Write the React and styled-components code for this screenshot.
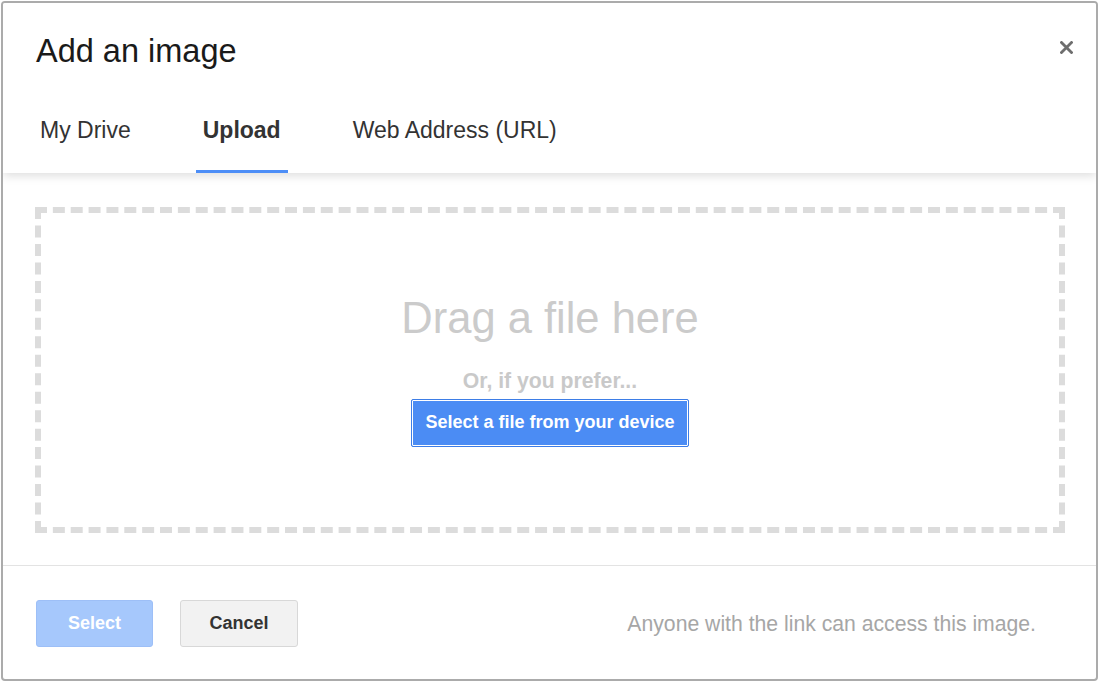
import React, { useState } from "react";
import styled, { createGlobalStyle } from "styled-components";

const GlobalStyle = createGlobalStyle`
  html, body {
    margin: 0;
    background: #fff;
    font-family: "Liberation Sans", Arial, sans-serif;
  }
`;

const tabs = [
  { id: "drive", text: "My Drive" },
  { id: "upload", text: "Upload" },
  { id: "url", text: "Web Address (URL)" },
];

export default function App() {
  const [active, setActive] = useState("upload");

  return (
    <>
      <GlobalStyle />
      <Dialog>
        <Header>
          <TitleRow>
            <Title>Add an image</Title>
            <Close type="button" aria-label="Close">
              <svg width="13" height="13" viewBox="0 0 13 13">
                <path d="M1.5 1.5 L11.5 11.5 M11.5 1.5 L1.5 11.5" stroke="#6e6e6e" strokeWidth="2.8" strokeLinecap="square" />
              </svg>
            </Close>
          </TitleRow>
          <Tabs>
            {tabs.map((tab) => (
              <Tab key={tab.id} $active={tab.id === active} onClick={() => setActive(tab.id)}>
                {tab.text}
              </Tab>
            ))}
          </Tabs>
        </Header>

        <Body>
          <DropZone>
            <DropTitle>Drag a file here</DropTitle>
            <Prefer>Or, if you prefer...</Prefer>
            <PickButton type="button">Select a file from your device</PickButton>
          </DropZone>
        </Body>

        <Footer>
          <FooterButton type="button" $primary disabled>Select</FooterButton>
          <FooterButton type="button">Cancel</FooterButton>
          <Note>Anyone with the link can access this image.</Note>
        </Footer>
      </Dialog>
    </>
  );
}

const Dialog = styled.div`
  box-sizing: border-box;
  margin: 1px;
  width: 1097px;
  height: 680px;
  border: 2px solid #ababab;
  border-radius: 4px;
  background: #fff;
  display: flex;
  flex-direction: column;
  overflow: hidden;
`;

const Header = styled.div`
  position: relative;
  z-index: 1;
  padding: 31.5px 22px 0 30px;
  background: #fff;
  box-shadow: 0 3px 9px rgba(0, 0, 0, 0.13);
`;

const TitleRow = styled.div`
  display: flex;
  justify-content: space-between;
  align-items: flex-start;
`;

const Title = styled.h1`
  margin: 0 0 0 3px;
  font-size: 32.5px;
  line-height: 1;
  font-weight: 400;
  color: #1a1a1a;
`;

const Close = styled.button`
  width: 16px;
  height: 16px;
  margin-top: 5px;
  padding: 0;
  border: 0;
  background: none;
  display: flex;
  align-items: center;
  justify-content: center;
  cursor: pointer;
`;

const Tabs = styled.div`
  display: flex;
  gap: 58px;
  margin-top: 52px;
`;

const Tab = styled.div`
  padding: 0 7px 28px;
  font-size: 23px;
  line-height: 1;
  color: #333;
  font-weight: ${(p) => (p.$active ? 700 : 400)};
  border-bottom: 3px solid ${(p) => (p.$active ? "#4d8ef7" : "transparent")};
  cursor: pointer;
`;

const Body = styled.div`
  box-sizing: border-box;
  flex: 1;
  padding: 34px 31px 32px 32px;
  display: flex;
`;

const DropZone = styled.div`
  flex: 1;
  border: 6px dashed #dcdcdc;
  display: flex;
  flex-direction: column;
  align-items: center;
  justify-content: center;
  padding-top: 4px;
`;

const DropTitle = styled.div`
  font-size: 43.5px;
  line-height: 1;
  color: #cbcbcb;
`;

const Prefer = styled.div`
  margin-top: 29px;
  font-size: 21.2px;
  line-height: 1;
  font-weight: 700;
  color: #c9c9c9;
`;

const PickButton = styled.button`
  margin-top: 8px;
  height: 48px;
  padding: 0 13px;
  border: 1px solid #3d7de6;
  border-radius: 2px;
  box-shadow: inset 0 0 0 1px #fff;
  background: #4b8cf4;
  color: #fff;
  font-family: inherit;
  font-size: 18px;
  font-weight: 700;
  cursor: pointer;
`;

const Footer = styled.div`
  box-sizing: border-box;
  height: 114px;
  flex: none;
  border-top: 1px solid #e3e3e3;
  padding: 2px 60px 0 33px;
  display: flex;
  align-items: center;
  gap: 27px;
`;

const FooterButton = styled.button`
  box-sizing: border-box;
  width: ${(p) => (p.$primary ? "117px" : "118px")};
  height: 47px;
  border-radius: 3px;
  border: 1px solid ${(p) => (p.$primary ? "#9dbff7" : "#d8d8d8")};
  background: ${(p) => (p.$primary ? "#a6c8fc" : "#f2f2f2")};
  color: ${(p) => (p.$primary ? "#fff" : "#333")};
  font-family: inherit;
  font-size: 18px;
  font-weight: 700;
  cursor: pointer;
`;

const Note = styled.div`
  margin-left: auto;
  font-size: 21.2px;
  color: #a6a6a6;
`;
